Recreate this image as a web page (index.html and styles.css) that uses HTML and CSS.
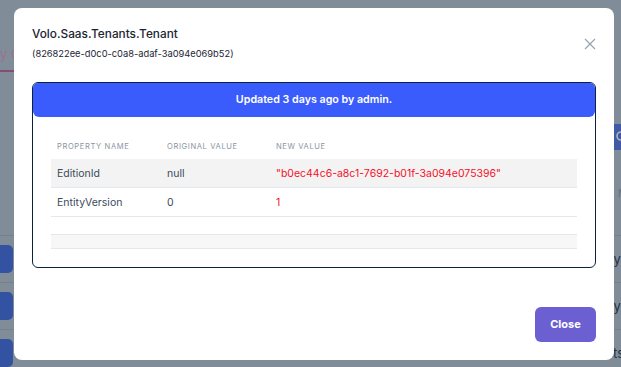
FILE: index.html
```
<!doctype html>
<html lang="en">
<head>
	<meta charset="UTF-8">
	<title>Entity Changes</title>
<link rel="stylesheet" href="styles.css">
</head>
<body>
	<div class="page">
		<div class="tabs">
			<span class="tab active">y C</span>
		</div>
		<div class="toolbar">
			<span class="search-btn">
				<svg width="14" height="14" viewBox="0 0 14 14"><circle cx="6" cy="6" r="4" fill="none" stroke="#fff" stroke-width="1.6"/><path d="M9 9l3.5 3.5" stroke="#fff" stroke-width="1.6"/></svg>
			</span>
		</div>
		<div class="grid-head"><span>M</span></div>
		<div class="grid-row"><span class="act"></span><span class="txt">y.</span></div>
		<div class="grid-row"><span class="act"></span><span class="txt">y.</span></div>
		<div class="grid-row"><span class="act"></span><span class="txt">ts</span></div>
	</div>

	<div class="backdrop">
		<div class="modal">
			<div class="modal-head">
				<div>
					<h3 class="modal-title">Volo.Saas.Tenants.Tenant</h3>
					<div class="modal-sub">(826822ee-d0c0-c0a8-adaf-3a094e069b52)</div>
				</div>
				<span class="close-x">
					<svg width="12" height="12" viewBox="0 0 12 12"><path d="M1 1l10 10M11 1L1 11" stroke="#9aa5b1" stroke-width="1.3"/></svg>
				</span>
			</div>
			<div class="card">
				<div class="card-head">Updated 3 days ago by admin.</div>
				<div class="card-body">
					<table class="changes">
						<thead>
							<tr>
								<th class="c1">Property name</th>
								<th class="c2">Original value</th>
								<th>New value</th>
							</tr>
						</thead>
						<tbody>
							<tr class="odd">
								<td>EditionId</td>
								<td>null</td>
								<td class="new">"b0ec44c6-a8c1-7692-b01f-3a094e075396"</td>
							</tr>
							<tr>
								<td>EntityVersion</td>
								<td>0</td>
								<td class="new">1</td>
							</tr>
							<tr class="blank">
								<td></td><td></td><td></td>
							</tr>
							<tr class="blank foot">
								<td></td><td></td><td></td>
							</tr>
						</tbody>
					</table>
				</div>
			</div>
			<div class="modal-foot">
				<a href="javascript:;" class="btn-close">Close</a>
			</div>
		</div>
	</div>
</body>
</html>
```
FILE: styles.css
```
body{
	margin: 0;
	font-family: Inter, "Noto Sans", sans-serif;
}
.page{
	height: 367px;
	background-color: #b8cbdc;
	overflow: hidden;
}
.tabs{
	height: 72px;
	display: flex;
	align-items: flex-end;
}
.tab{
	font-size: 13px;
	color: #e2a0cf;
	padding: 0 0 8px 0;
	border-bottom: 2px solid #c56ba5;
	width: 120px;
}
.toolbar{
	height: 78px;
	display: flex;
	justify-content: flex-end;
	align-items: flex-end;
}
.search-btn{
	display: flex;
	align-items: center;
	justify-content: center;
	width: 30px;
	height: 26px;
	margin-right: -16px;
	background-color: #5d82f0;
	border-radius: 4px;
}
.grid-head{
	height: 85px;
	display: flex;
	justify-content: flex-end;
	align-items: center;
	border-bottom: 1px solid #a8bbcc;
	font-size: 10px;
	color: #8fa0b0;
}
.grid-head span{
	margin-right: -6px;
}
.grid-row{
	height: 46px;
	display: flex;
	align-items: center;
	justify-content: space-between;
	border-bottom: 1px solid #a8bbcc;
}
.act{
	width: 40px;
	height: 28px;
	margin-left: -27px;
	background-color: #4a78e8;
	border-radius: 5px;
}
.txt{
	font-size: 13px;
	color: #33475a;
	margin-right: -3px;
}

.backdrop{
	position: fixed;
	left: 0;
	top: 0;
	right: 0;
	bottom: 0;
	background-color: rgba(0, 0, 0, 0.3);
	padding: 8px 0 0 14px;
}
.modal{
	width: 600px;
	box-sizing: border-box;
	background-color: #fff;
	border-radius: 8px;
	padding: 16px 18px 18px;
}
.modal-head{
	display: flex;
	justify-content: space-between;
	align-items: center;
}
.modal-title{
	margin: 0;
	font-size: 11.8px;
	line-height: 20px;
	font-weight: 500;
	color: #1b2533;
}
.modal-sub{
	font-size: 9.3px;
	line-height: 14px;
	margin-top: 3px;
	color: #1b2533;
}
.close-x{
	display: flex;
	padding-top: 2px;
}
.card{
	margin-top: 21px;
	border: 1px solid #0b2340;
	border-radius: 6px;
	overflow: hidden;
}
.card-head{
	height: 34px;
	line-height: 34px;
	background-color: #3a5cfd;
	color: #fff;
	font-size: 10.7px;
	font-weight: 600;
	text-align: center;
	border-radius: 0 0 6px 6px;
}
.card-body{
	padding: 16px 18px 18px;
}
.changes{
	width: 100%;
	border-collapse: collapse;
	font-size: 10.5px;
	color: #3b4a5c;
}
.changes th{
	height: 26px;
	text-align: left;
	font-size: 7.6px;
	font-weight: 400;
	letter-spacing: 0.6px;
	text-transform: uppercase;
	color: #8a95a2;
	padding: 0 6px;
}
.changes .c1{
	width: 98px;
}
.changes .c2{
	width: 97px;
}
.changes td{
	height: 28px;
	padding: 0 6px;
	border-bottom: 1px solid #e3e8ee;
}
.changes tr.odd td{
	background-color: #f3f3f3;
}
.changes td.new{
	color: #f5112a;
}
.changes tr.blank td{
	height: 17px;
}
.changes tr.foot td{
	height: 13px;
	background-color: #f7f7f7;
}
.modal-foot{
	display: flex;
	justify-content: flex-end;
	margin-top: 39px;
}
.btn-close{
	display: block;
	width: 61px;
	line-height: 35px;
	text-align: center;
	text-decoration: none;
	background-color: #6c5fd2;
	color: #fff;
	font-size: 11px;
	font-weight: 700;
	border-radius: 6px;
}
```
